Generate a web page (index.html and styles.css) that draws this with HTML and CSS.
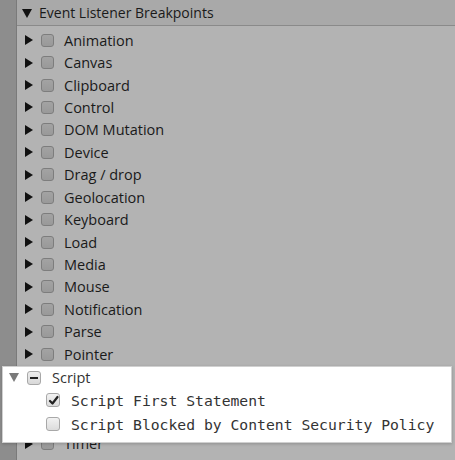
FILE: index.html
```html
<!DOCTYPE html>
<html>
<head>
<meta charset="utf-8">
<link rel="stylesheet" href="styles.css">
</head>
<body>
<div class="page">
  <div class="gutter"></div>
  <div class="pane">
    <div class="header"><span class="tri-down"></span><span class="title">Event Listener Breakpoints</span></div>
    <div class="list">
      <div class="row"><span class="tri-right"></span><span class="cb"></span><span class="label">Animation</span></div>
      <div class="row"><span class="tri-right"></span><span class="cb"></span><span class="label">Canvas</span></div>
      <div class="row"><span class="tri-right"></span><span class="cb"></span><span class="label">Clipboard</span></div>
      <div class="row"><span class="tri-right"></span><span class="cb"></span><span class="label">Control</span></div>
      <div class="row"><span class="tri-right"></span><span class="cb"></span><span class="label">DOM Mutation</span></div>
      <div class="row"><span class="tri-right"></span><span class="cb"></span><span class="label">Device</span></div>
      <div class="row"><span class="tri-right"></span><span class="cb"></span><span class="label">Drag / drop</span></div>
      <div class="row"><span class="tri-right"></span><span class="cb"></span><span class="label">Geolocation</span></div>
      <div class="row"><span class="tri-right"></span><span class="cb"></span><span class="label">Keyboard</span></div>
      <div class="row"><span class="tri-right"></span><span class="cb"></span><span class="label">Load</span></div>
      <div class="row"><span class="tri-right"></span><span class="cb"></span><span class="label">Media</span></div>
      <div class="row"><span class="tri-right"></span><span class="cb"></span><span class="label">Mouse</span></div>
      <div class="row"><span class="tri-right"></span><span class="cb"></span><span class="label">Notification</span></div>
      <div class="row"><span class="tri-right"></span><span class="cb"></span><span class="label">Parse</span></div>
      <div class="row"><span class="tri-right"></span><span class="cb"></span><span class="label">Pointer</span></div>
      <div class="row covered"></div>
      <div class="row covered"></div>
      <div class="row covered"></div>
      <div class="row"><span class="tri-right"></span><span class="cb"></span><span class="label">Timer</span></div>
    </div>
  </div>
  <div class="popup">
    <div class="prow first"><span class="ptri-down"></span><span class="pcb mixed"><span class="dash"></span></span><span class="plabel">Script</span></div>
    <div class="prow sub"><span class="pcb checked"><svg width="11" height="11" viewBox="0 0 11 11"><path d="M2 6 L4.5 8.5 L9.5 2" fill="none" stroke="#222" stroke-width="2.2" stroke-linecap="round" stroke-linejoin="round"/></svg></span><span class="mono">Script First Statement</span></div>
    <div class="prow sub"><span class="pcb"></span><span class="mono">Script Blocked by Content Security Policy</span></div>
  </div>
</div>
</body>
</html>
```
FILE: styles.css
```css
html, body { margin: 0; padding: 0; }
body { width: 455px; height: 460px; overflow: hidden; background: #b3b3b3; font-family: "Open Sans", "Noto Sans", sans-serif; }
.page { position: relative; display: flex; width: 455px; height: 460px; overflow: hidden; }
.gutter { width: 16px; flex: none; background: #8d8d8d; border-right: 1px solid #7a7a7a; }
.pane { flex: 1; background: #b3b3b3; }
.header { height: 25px; background: #a9a9a9; border-bottom: 1px solid #8a8a8a; display: flex; align-items: center; padding-left: 5px; }
.tri-down { width: 0; height: 0; border-left: 5px solid transparent; border-right: 5px solid transparent; border-top: 9px solid #111; margin-right: 7px; margin-top: 1px; }
.title { font-size: 14px; color: #1a1a1a; }
.list { padding-top: 3px; }
.row { height: 22.43px; display: flex; align-items: center; padding-left: 8px; }
.tri-right { width: 0; height: 0; border-top: 5px solid transparent; border-bottom: 5px solid transparent; border-left: 8px solid #111; margin-right: 8px; }
.cb { width: 11px; height: 11px; border: 1px solid #7d7d7d; border-radius: 3px; background: linear-gradient(#a3a3a3, #999); margin-right: 10px; }
.label { font-size: 14.5px; color: #1a1a1a; }
.popup { position: absolute; left: 2px; top: 366px; width: 448px; height: 75px; background: #fff; border: 1px solid #d0d0d0; box-shadow: 0 1px 3px rgba(0,0,0,0.2); }
.prow { height: 24px; display: flex; align-items: center; padding-left: 6px; }
.prow.first { height: 21px; }
.ptri-down { width: 0; height: 0; border-left: 5px solid transparent; border-right: 5px solid transparent; border-top: 9px solid #7a7a7a; margin-right: 8px; }
.pcb { width: 12px; height: 12px; border: 1px solid #a8a8a8; border-radius: 3px; background: linear-gradient(#f2f2f2, #dcdcdc); margin-right: 11px; display: flex; align-items: center; justify-content: center; flex: none; }
.pcb.mixed { background: linear-gradient(#eee, #d8d8d8); }
.dash { width: 8px; height: 2px; background: #222; }
.plabel { font-size: 14.5px; color: #333; }
.prow.sub { padding-left: 43px; }
.mono { font-family: "DejaVu Sans Mono", monospace; font-size: 14.72px; color: #333; }
```
